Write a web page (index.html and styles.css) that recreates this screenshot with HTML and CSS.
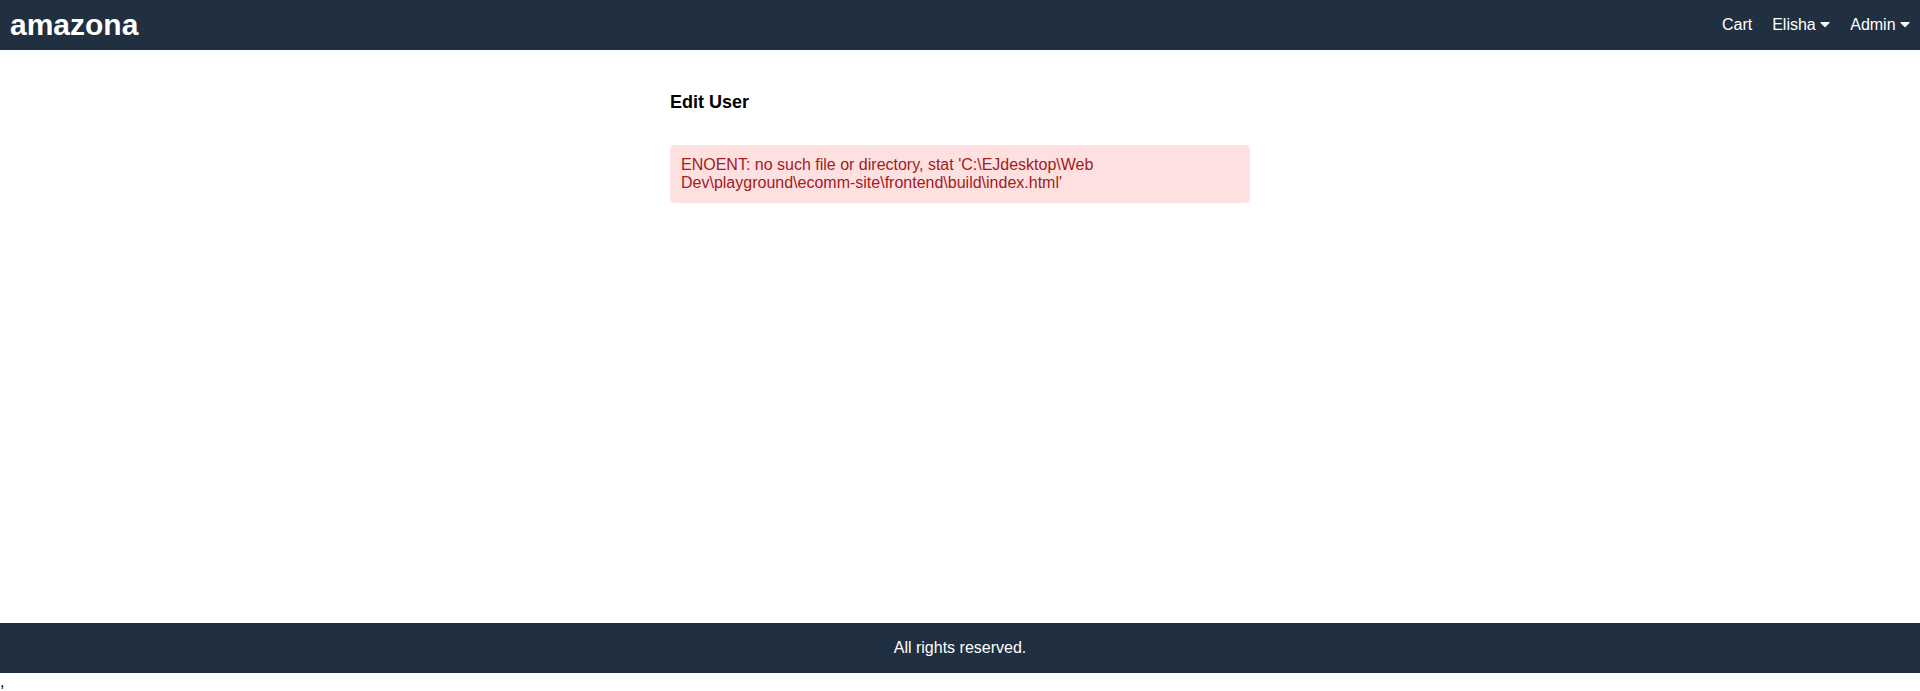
FILE: index.html
```html
<!DOCTYPE html>
<html lang="en">
<head>
<meta charset="utf-8">
<title>amazona</title>
<link rel="stylesheet" href="styles.css">
</head>
<body>
<div class="grid-container">
  <header class="header">
    <div><a class="brand" href="#">amazona</a></div>
    <nav class="nav">
      <a href="#">Cart</a>
      <a href="#">Elisha <svg class="caret" viewBox="0 0 320 512" aria-hidden="true"><path d="M31.3 192h257.3c17.8 0 26.7 21.5 14.1 34.1L174.1 354.8c-7.8 7.8-20.5 7.8-28.3 0L17.2 226.1C4.6 213.5 13.5 192 31.3 192z"/></svg></a>
      <a href="#">Admin <svg class="caret" viewBox="0 0 320 512" aria-hidden="true"><path d="M31.3 192h257.3c17.8 0 26.7 21.5 14.1 34.1L174.1 354.8c-7.8 7.8-20.5 7.8-28.3 0L17.2 226.1C4.6 213.5 13.5 192 31.3 192z"/></svg></a>
    </nav>
  </header>
  <main class="main">
    <div class="form">
      <div class="form-row"><h1 class="title">Edit User</h1></div>
      <div class="form-row">
        <div class="alert alert-danger">ENOENT: no such file or directory, stat 'C:\EJdesktop\Web Dev\playground\ecomm-site\frontend\build\index.html'</div>
      </div>
    </div>
  </main>
  <footer class="footer">All rights reserved.</footer>
</div>
<div class="stray">,</div>
</body>
</html>
```
FILE: styles.css
```css
html, body {
  margin: 0;
  padding: 0;
  height: 100%;
}
body {
  font-family: "Liberation Sans", Arial, Helvetica, sans-serif;
  font-size: 16px;
  color: #000;
}
a {
  text-decoration: none;
}
.grid-container {
  display: grid;
  grid-template-rows: 50px 1fr 50px;
  height: calc(100vh - 18px);
}
.header {
  background-color: #203040;
  display: flex;
  justify-content: space-between;
  align-items: center;
}
.header a {
  color: #ffffff;
  padding: 10px;
}
.header a.brand {
  font-size: 30px;
  font-weight: bold;
}
.nav {
  display: flex;
  align-items: center;
}
.caret {
  width: 10px;
  height: 16px;
  fill: #ffffff;
  vertical-align: -2px;
}
.main {
  padding: 10px;
}
.form {
  max-width: 600px;
  margin: 0 auto;
}
.form-row {
  display: flex;
  flex-direction: column;
  margin: 10px;
}
.title {
  font-size: 18px;
  font-weight: bold;
  padding: 10px 0;
  margin: 12px 0;
}
.alert {
  padding: 10px;
  border: 1px solid transparent;
  border-radius: 5px;
}
.alert-danger {
  color: #a02020;
  background-color: #ffe0e0;
}
.footer {
  background-color: #203040;
  color: #ffffff;
  display: flex;
  justify-content: center;
  align-items: center;
}
.stray {
  line-height: 18px;
}
```
